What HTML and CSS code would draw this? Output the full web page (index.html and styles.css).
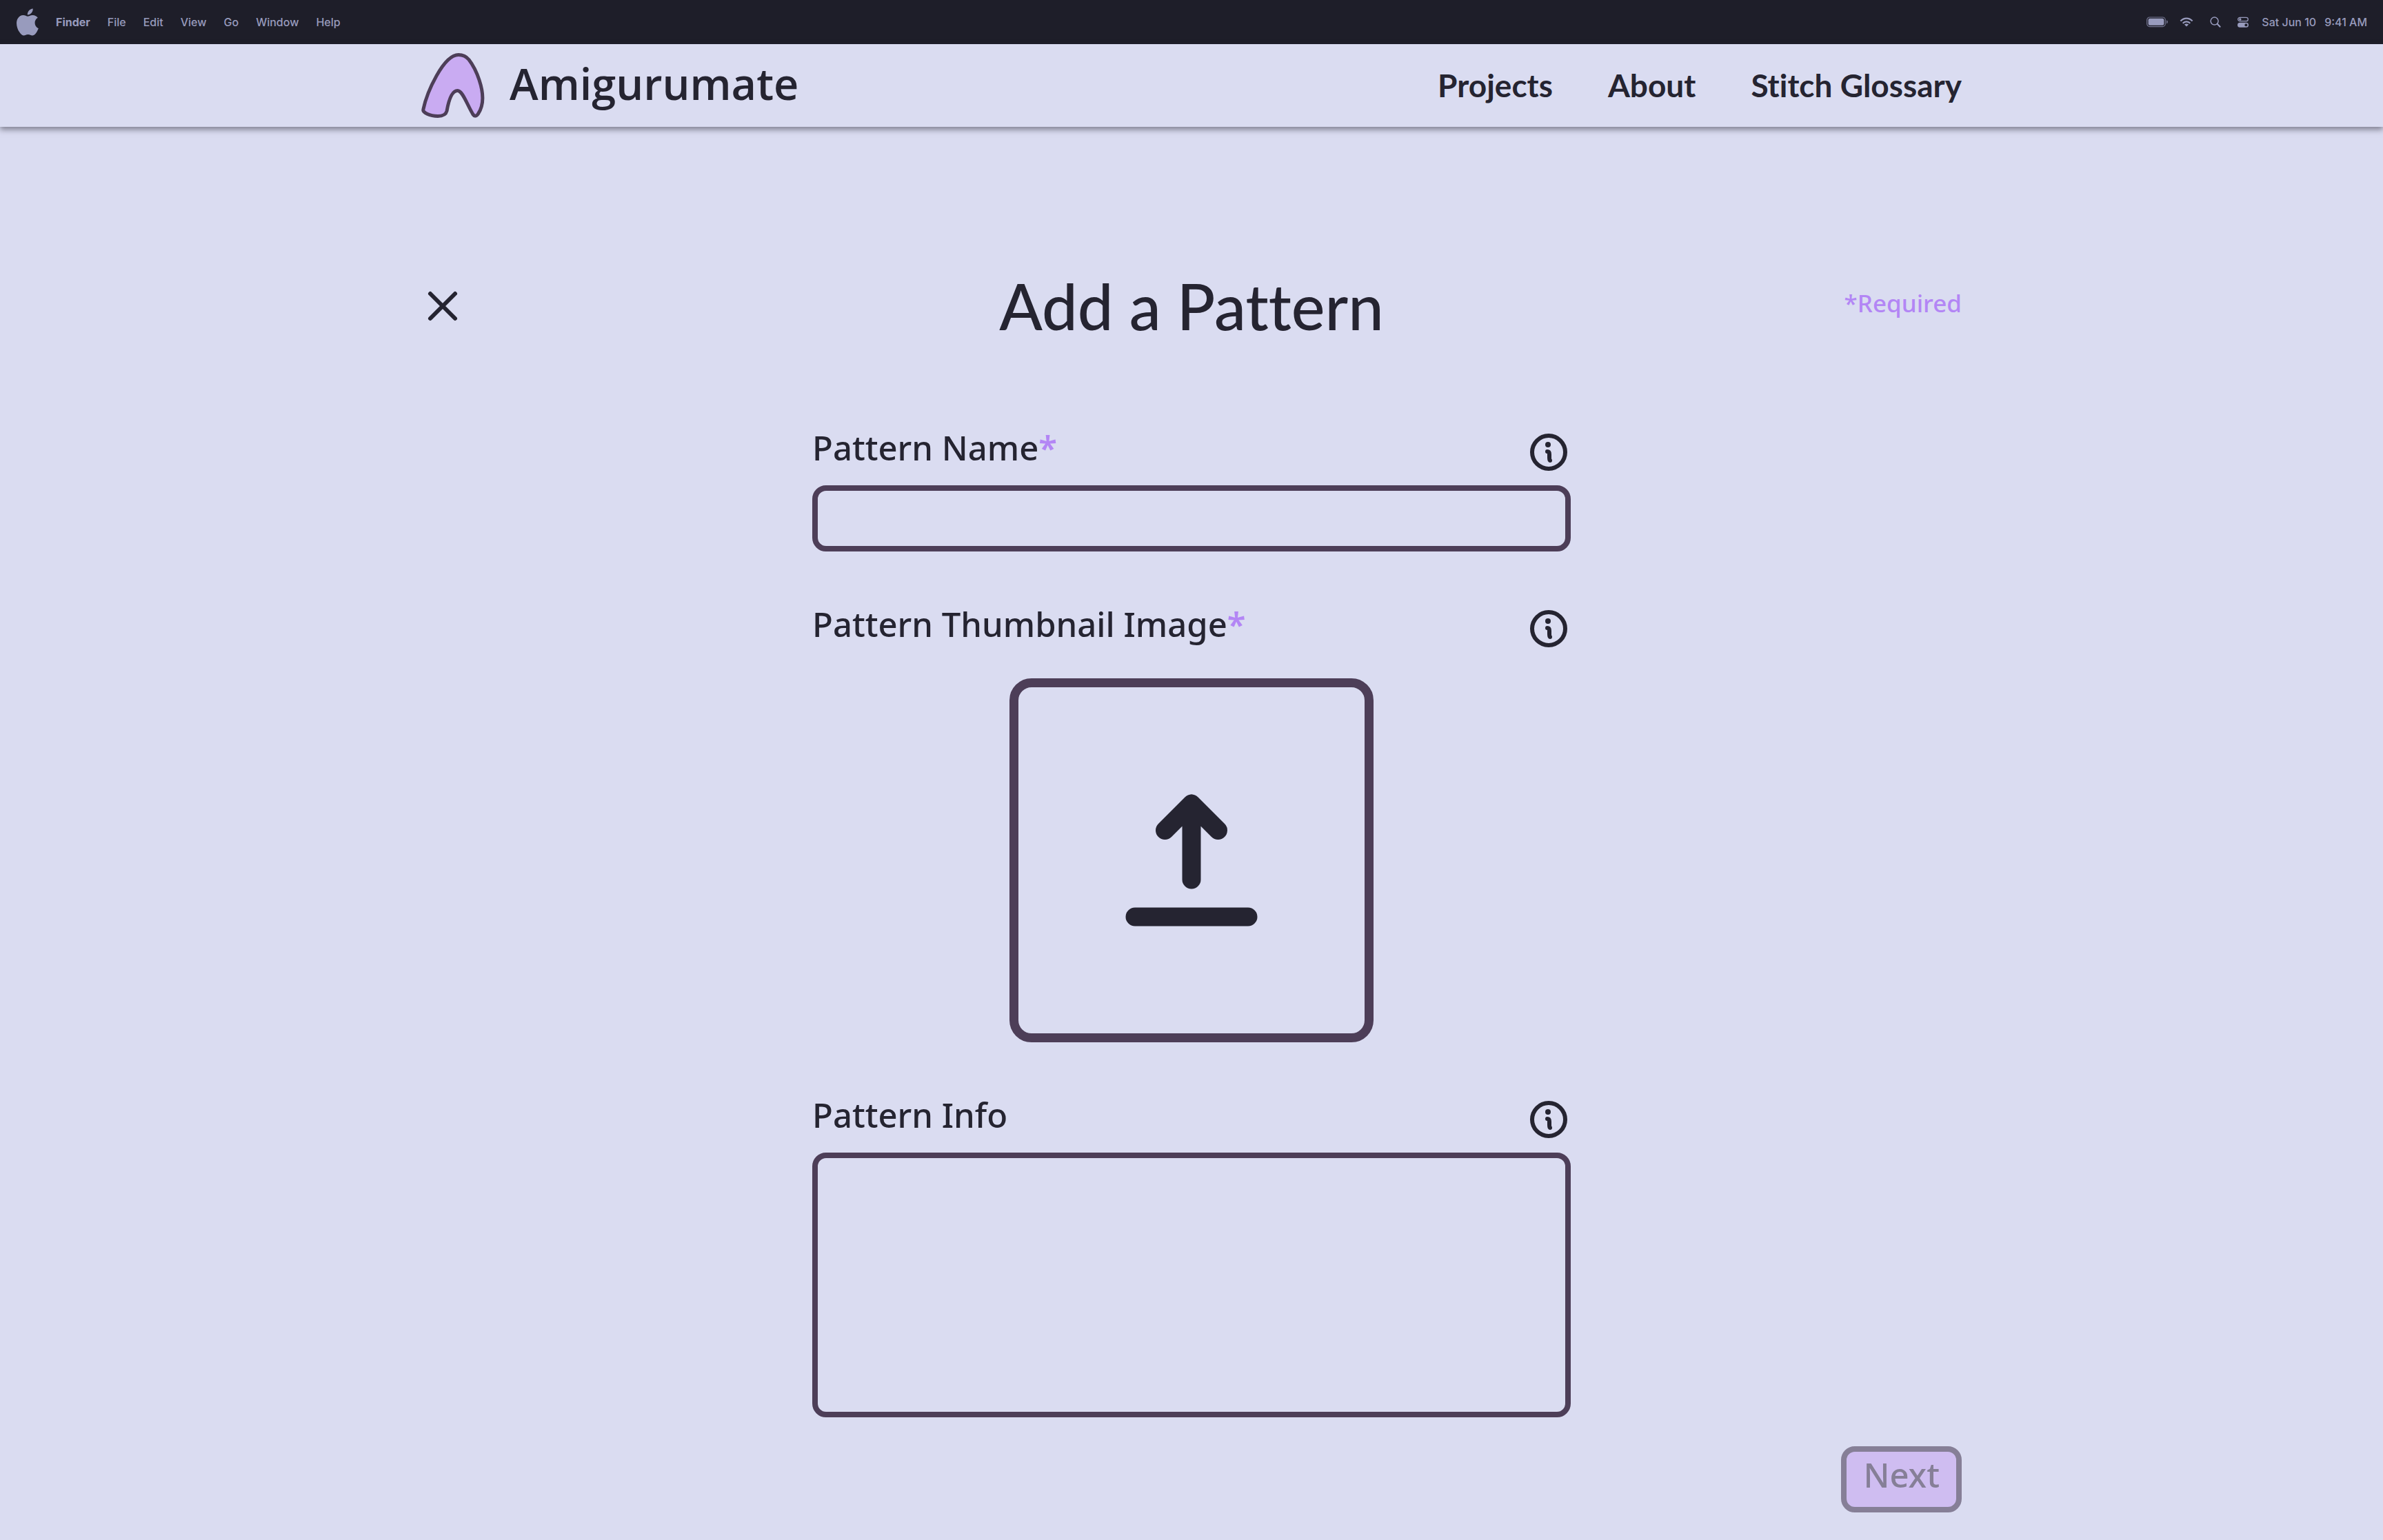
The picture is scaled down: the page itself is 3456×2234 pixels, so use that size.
FILE: index.html
```html
<!DOCTYPE html>
<html lang="en">
<head>
<meta charset="utf-8">
<meta name="viewport" content="width=device-width, initial-scale=1">
<title>Add a Pattern</title>
<link rel="stylesheet" href="styles.css">
</head>
<body>
<svg class="sprite" aria-hidden="true">
  <symbol id="info" viewBox="0 0 64 64">
    <circle cx="32" cy="32" r="24" fill="none" stroke="currentColor" stroke-width="6"/>
    <circle cx="31" cy="21" r="4" fill="currentColor"/>
    <path d="M30 31Q33 31 33 35V40Q33 44 34 44" fill="none" stroke="currentColor" stroke-width="6" stroke-linecap="round" stroke-linejoin="round"/>
  </symbol>
</svg>

<div class="menubar">
  <div class="menubar-menus">
    <svg class="apple" viewBox="2.2 0 19.7 24" fill="currentColor" aria-hidden="true"><path d="M12.152 6.896c-.948 0-2.415-1.078-3.96-1.04-2.04.027-3.91 1.183-4.961 3.014-2.117 3.675-.546 9.103 1.519 12.09 1.013 1.454 2.208 3.09 3.792 3.039 1.52-.065 2.09-.987 3.935-.987 1.831 0 2.35.987 3.96.948 1.637-.026 2.676-1.48 3.676-2.948 1.156-1.688 1.636-3.325 1.662-3.415-.039-.013-3.182-1.221-3.22-4.857-.026-3.04 2.48-4.494 2.597-4.559-1.429-2.09-3.623-2.324-4.39-2.376-2-.156-3.675 1.09-4.61 1.09zM15.53 3.83c.843-1.012 1.4-2.427 1.245-3.83-1.207.052-2.662.805-3.532 1.818-.78.896-1.454 2.338-1.273 3.714 1.338.104 2.715-.688 3.559-1.701"/></svg>
    <button class="menu menu-app" type="button">Finder</button>
    <button class="menu" type="button">File</button>
    <button class="menu" type="button">Edit</button>
    <button class="menu" type="button">View</button>
    <button class="menu" type="button">Go</button>
    <button class="menu" type="button">Window</button>
    <button class="menu" type="button">Help</button>
  </div>
  <div class="menubar-status">
    <svg class="battery" viewBox="0 0 31 16" aria-hidden="true">
      <rect x=".7" y="1" width="26.6" height="13.6" rx="4" fill="none" stroke="currentColor" stroke-width="1.2" opacity=".7"/>
      <rect x="2.6" y="2.8" width="22.8" height="10" rx="2.4" fill="currentColor"/>
      <path d="M29 5.2C31.400 6.200 31.400 9.400 29 10.400Z" fill="currentColor" opacity=".7"/>
    </svg>
    <svg class="wifi" viewBox="0 0 20 16" aria-hidden="true">
      <g fill="none" stroke="currentColor" stroke-width="2.200">
        <path d="M1.400 6.500C6.300 1.300 13.700 1.300 18.600 6.500"/>
        <path d="M4.700 9.700C7.700 6.600 12.300 6.600 15.300 9.700"/>
      </g>
      <path d="M10 14.600L6.900 11.500C8.700 10 11.300 10 13.100 11.500Z" fill="currentColor"/>
    </svg>
    <svg class="glyph" viewBox="0 0 16 16" fill="none" stroke="currentColor" aria-hidden="true">
      <circle cx="6.600" cy="6.600" r="5.500" stroke-width="1.500"/>
      <path d="M10.800 10.800L14.600 14.800" stroke-width="2" stroke-linecap="round"/>
    </svg>
    <svg class="glyph" viewBox="0 0 16 16" aria-hidden="true">
      <rect x=".7" y="1.300" width="14.600" height="5.400" rx="2.700" fill="none" stroke="currentColor" stroke-width="1.300"/>
      <circle cx="3.800" cy="4" r="1.700" fill="currentColor"/>
      <rect y="8.800" width="16" height="7" rx="3.500" fill="currentColor"/>
      <circle class="knob" cx="12.400" cy="12.300" r="2"/>
    </svg>
    <time class="clock"><span>Sat Jun 10</span><span>9:41 AM</span></time>
  </div>
</div>

<header class="header">
  <div class="header-inner">
    <a class="brand" href="#">
      <svg class="brand-mark" viewBox="0 0 92 94" aria-hidden="true"><path d="M54 2.500C32 2.500 8 57 2.800 82C1.800 86 12 91.400 24 91.400C33 91.400 36 88 37 84C40 67 45 54.500 52.500 54.500C60 54.500 66 74 75 89C77 92 80 92 82.500 88C92 74 89 54 84 39C80 27 74 16 69 9.500C64.500 4 60 2.500 54 2.500Z" fill="#c9abf2" stroke="#4d3e58" stroke-width="5" stroke-linejoin="round"/></svg>
      <span class="brand-name">Amigurumate</span>
    </a>
    <nav class="nav">
      <a href="#">Projects</a>
      <a href="#">About</a>
      <a href="#">Stitch Glossary</a>
    </nav>
  </div>
</header>

<main class="page">
  <div class="title-row">
    <button class="close" type="button" aria-label="Close">
      <svg viewBox="0 0 60 60" fill="none" stroke="currentColor" stroke-width="6" stroke-linecap="round" aria-hidden="true"><path d="M13 12L49 48M49 12L13 48"/></svg>
    </button>
    <h1>Add a Pattern</h1>
    <p class="required">*Required</p>
  </div>

  <form class="form" id="pattern">
    <div class="field">
      <div class="field-head">
        <label for="name">Pattern Name<span class="star">*</span></label>
        <button class="info" type="button" aria-label="About the pattern name"><svg><use href="#info"/></svg></button>
      </div>
      <input class="box" id="name" type="text" required>
    </div>
    <div class="field field-image">
      <div class="field-head">
        <label for="thumb">Pattern Thumbnail Image<span class="star">*</span></label>
        <button class="info" type="button" aria-label="About the thumbnail image"><svg><use href="#info"/></svg></button>
      </div>
      <label class="upload">
        <input class="upload-input" id="thumb" type="file" accept="image/*" aria-label="Upload thumbnail image">
        <svg viewBox="0 0 192 192" fill="none" stroke="currentColor" stroke-width="27" stroke-linecap="round" stroke-linejoin="round" aria-hidden="true"><path d="M96 124V14M57.500 52.500L96 14L134.500 52.500M14 178H178"/></svg>
      </label>
    </div>
    <div class="field">
      <div class="field-head">
        <label for="details">Pattern Info</label>
        <button class="info" type="button" aria-label="About the pattern info"><svg><use href="#info"/></svg></button>
      </div>
      <textarea class="box box-tall" id="details"></textarea>
    </div>
  </form>

  <div class="actions">
    <button class="next" type="submit" form="pattern" disabled>Next</button>
  </div>
</main>
</body>
</html>
```
FILE: styles.css
```css
:root {
  --paper: #dadcf1;
  --ink: #252431;
  --plum: #4d3e58;
  --violet: #b386f5;
  --bar: #1e1e29;
  --bar-ink: #989bbd;
}

* { box-sizing: border-box; }

body {
  margin: 0;
  background: var(--paper);
  color: var(--ink);
  font-family: "Noto Sans", sans-serif;
  font-variant-ligatures: none;
}

button {
  padding: 0;
  border: 0;
  background: none;
  color: inherit;
  font: inherit;
}

a { color: inherit; text-decoration: none; }
svg { display: block; }
.sprite { display: none; }

/* System menu bar */
.menubar {
  display: flex;
  align-items: center;
  justify-content: space-between;
  height: 64px;
  padding: 0 23px 0 24px;
  background: var(--bar);
  color: var(--bar-ink);
  font: 500 16px/20px Inter, sans-serif;
}
.menubar-menus { display: flex; align-items: center; gap: 25px; }
.apple { width: 32px; height: 40px; }
.menu-app { font-weight: 700; }
.menubar-status { display: flex; align-items: center; gap: 24px; }
.battery { width: 31px; height: 16px; }
.wifi { width: 20px; height: 16px; margin-left: -7px; }
.glyph { width: 16px; height: 16px; }
.knob { fill: var(--bar); }
.clock { display: flex; gap: 12px; margin-left: -5px; }

/* Site header */
.header {
  position: relative;
  padding: 0 40px;
  box-shadow: 0 4px 8px rgb(37 36 49 / 50%);
  background: var(--paper);
}
.header-inner {
  display: flex;
  align-items: center;
  justify-content: space-between;
  max-width: 2234px;
  height: 120px;
  margin: 0 auto;
}
.brand { display: flex; align-items: center; gap: 36px; }
.brand-mark { width: 92px; height: 94px; }
.brand-name {
  padding-bottom: 6px;
  font-family: "Open Sans", sans-serif;
  font-size: 63px;
  font-weight: 600;
  line-height: 80px;
}
.nav {
  display: flex;
  gap: 80px;
  font-family: Lato, sans-serif;
  font-size: 46px;
  font-weight: 700;
  line-height: 56px;
}

/* Page */
.page {
  max-width: 2314px;
  margin: 0 auto;
  padding: 204px 40px 40px;
}
.title-row {
  display: grid;
  grid-template-columns: 1fr auto 1fr;
  align-items: center;
  margin-bottom: 124px;
}
.close, .close svg { width: 60px; height: 60px; }
h1 {
  margin: 0;
  font-family: Lato, sans-serif;
  font-size: 92px;
  font-weight: 500;
  line-height: 112px;
}
.required {
  justify-self: end;
  margin: 0;
  padding-bottom: 8px;
  color: var(--violet);
  font-size: 35px;
  font-weight: 500;
  line-height: 48px;
}

/* Form */
.form {
  display: grid;
  gap: 80px;
  max-width: 1100px;
  margin: 0 auto;
}
.field { display: grid; gap: 16px; }
.field-image { gap: 40px; }
.field-head {
  display: flex;
  align-items: flex-start;
  justify-content: space-between;
  font-size: 49px;
  font-weight: 500;
  line-height: 50px;
}
.star { color: var(--violet); font-weight: 600; }
.info, .info svg { width: 64px; height: 64px; }
.box {
  display: block;
  width: 100%;
  height: 96px;
  padding: 0 24px;
  border: 8px solid var(--plum);
  border-radius: 20px;
  background: transparent;
  color: inherit;
  font: 500 40px/56px "Noto Sans", sans-serif;
}
.box-tall {
  height: 384px;
  padding: 16px 24px;
  resize: none;
}
.upload {
  position: relative;
  display: grid;
  place-items: center;
  justify-self: center;
  width: 528px;
  height: 528px;
  border: 13px solid var(--plum);
  border-radius: 32px;
}
.upload svg { width: 192px; height: 192px; }
.upload-input {
  position: absolute;
  inset: 0;
  width: 100%;
  height: 100%;
  opacity: 0;
}

.actions {
  display: flex;
  justify-content: flex-end;
  margin-top: 42px;
}
.next {
  height: 96px;
  padding: 0 24px 14px;
  border: 8px solid #867f97;
  border-radius: 20px;
  background: #cfbdf1;
  color: #867f97;
  font-size: 49px;
  font-weight: 500;
  line-height: 50px;
}
```
